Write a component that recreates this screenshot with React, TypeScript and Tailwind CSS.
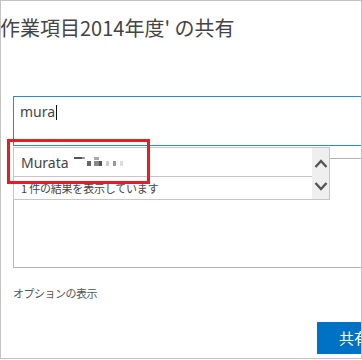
import React from "react";

const font = "font-['Noto_Sans','Noto_Sans_CJK_JP',sans-serif]";

function Chevron({ up }: { up?: boolean }) {
    return (
        <svg width="14" height="9" viewBox="0 0 14 9">
            <polyline
                points={up ? "1.5,8 7,2 12.5,8" : "1.5,1 7,7 12.5,1"}
                fill="none"
                stroke="#555"
                strokeWidth="2.4"
            />
        </svg>
    );
}

// pixelated (blurred) surname
function Mosaic() {
    return (
        <svg width="54" height="12" viewBox="0 0 54 12" className="ml-[5px]">
            <rect x="0" y="1" width="8" height="2" fill="#555" />
            <rect x="8" y="1" width="3" height="2" fill="#999" />
            <rect x="13" y="5" width="4" height="5" fill="#666" />
            <rect x="20" y="1" width="5" height="3" fill="#aaa" />
            <rect x="20" y="5" width="5" height="5" fill="#888" />
            <rect x="25" y="5" width="3" height="5" fill="#555" />
            <rect x="32" y="5" width="3" height="5" fill="#ccc" />
            <rect x="39" y="5" width="3" height="5" fill="#999" />
            <rect x="46" y="5" width="3" height="5" fill="#ddd" />
        </svg>
    );
}

export default function App() {
    return (
        <div className={`h-[360px] w-[362px] bg-white ${font}`}>
            <div className="h-[359px] w-[362px] overflow-hidden border border-[#c4c4c4]">
                <h1 className="-ml-px mt-[13px] text-[20px] leading-[28px] text-[#444] font-['Noto_Sans_CJK_JP',sans-serif] whitespace-nowrap">
                    作業項目2014年度' の共有
                </h1>

                <div className="relative ml-[12px] mt-[54px]">
                    {/* recipient input */}
                    <div className="h-[50px] w-[360px] border border-[#2b88d8] px-[6px] pt-[5px]">
                        <div className="flex items-center text-[14px] leading-[20px] text-[#444]">
                            mura
                            <span className="ml-px inline-block h-[15px] w-px bg-[#111]" />
                        </div>
                    </div>

                    {/* message box */}
                    <div className="mt-[12px] h-[110px] w-[360px] border border-[#b4b4b4]" />

                    {/* suggestion dropdown */}
                    <div className="absolute left-0 top-[51px] flex h-[53px] w-[317px] border border-[#c6c6c6] bg-white">
                        <div className="flex-1">
                            <div className="flex h-[29px] items-center border-b border-[#c6c6c6] pl-[7px] text-[14px] text-[#444]">
                                Murata
                                <Mosaic />
                            </div>
                            <div className="flex h-[22px] items-center pl-[7px] text-[11px] text-[#444] font-['Noto_Sans_CJK_JP',sans-serif] tracking-[-0.2px]">
                                1&nbsp;件の結果を表示しています
                            </div>
                        </div>
                        <div className="flex w-[17px] flex-col items-center gap-[14px] bg-[#efefef] pt-[11px]">
                            <Chevron up />
                            <Chevron />
                        </div>
                    </div>

                    {/* highlight */}
                    <div className="absolute left-[-6px] top-[43px] h-[45px] w-[143px] border-[3px] border-[#e51e25]" />
                </div>

                <p className="ml-[12px] mt-[17px] text-[11px] leading-[16px] text-[#555] tracking-[-0.5px] font-['Noto_Sans_CJK_JP',sans-serif]">
                    オプションの表示
                </p>

                <div className="mt-[21px] flex justify-end">
                    <button className="-mr-[40px] h-[32px] w-[84px] bg-[#0072c6] pl-[22px] text-left text-[15px] text-white font-['Noto_Sans_CJK_JP',sans-serif]">
                        共有
                    </button>
                </div>
            </div>
        </div>
    );
}
